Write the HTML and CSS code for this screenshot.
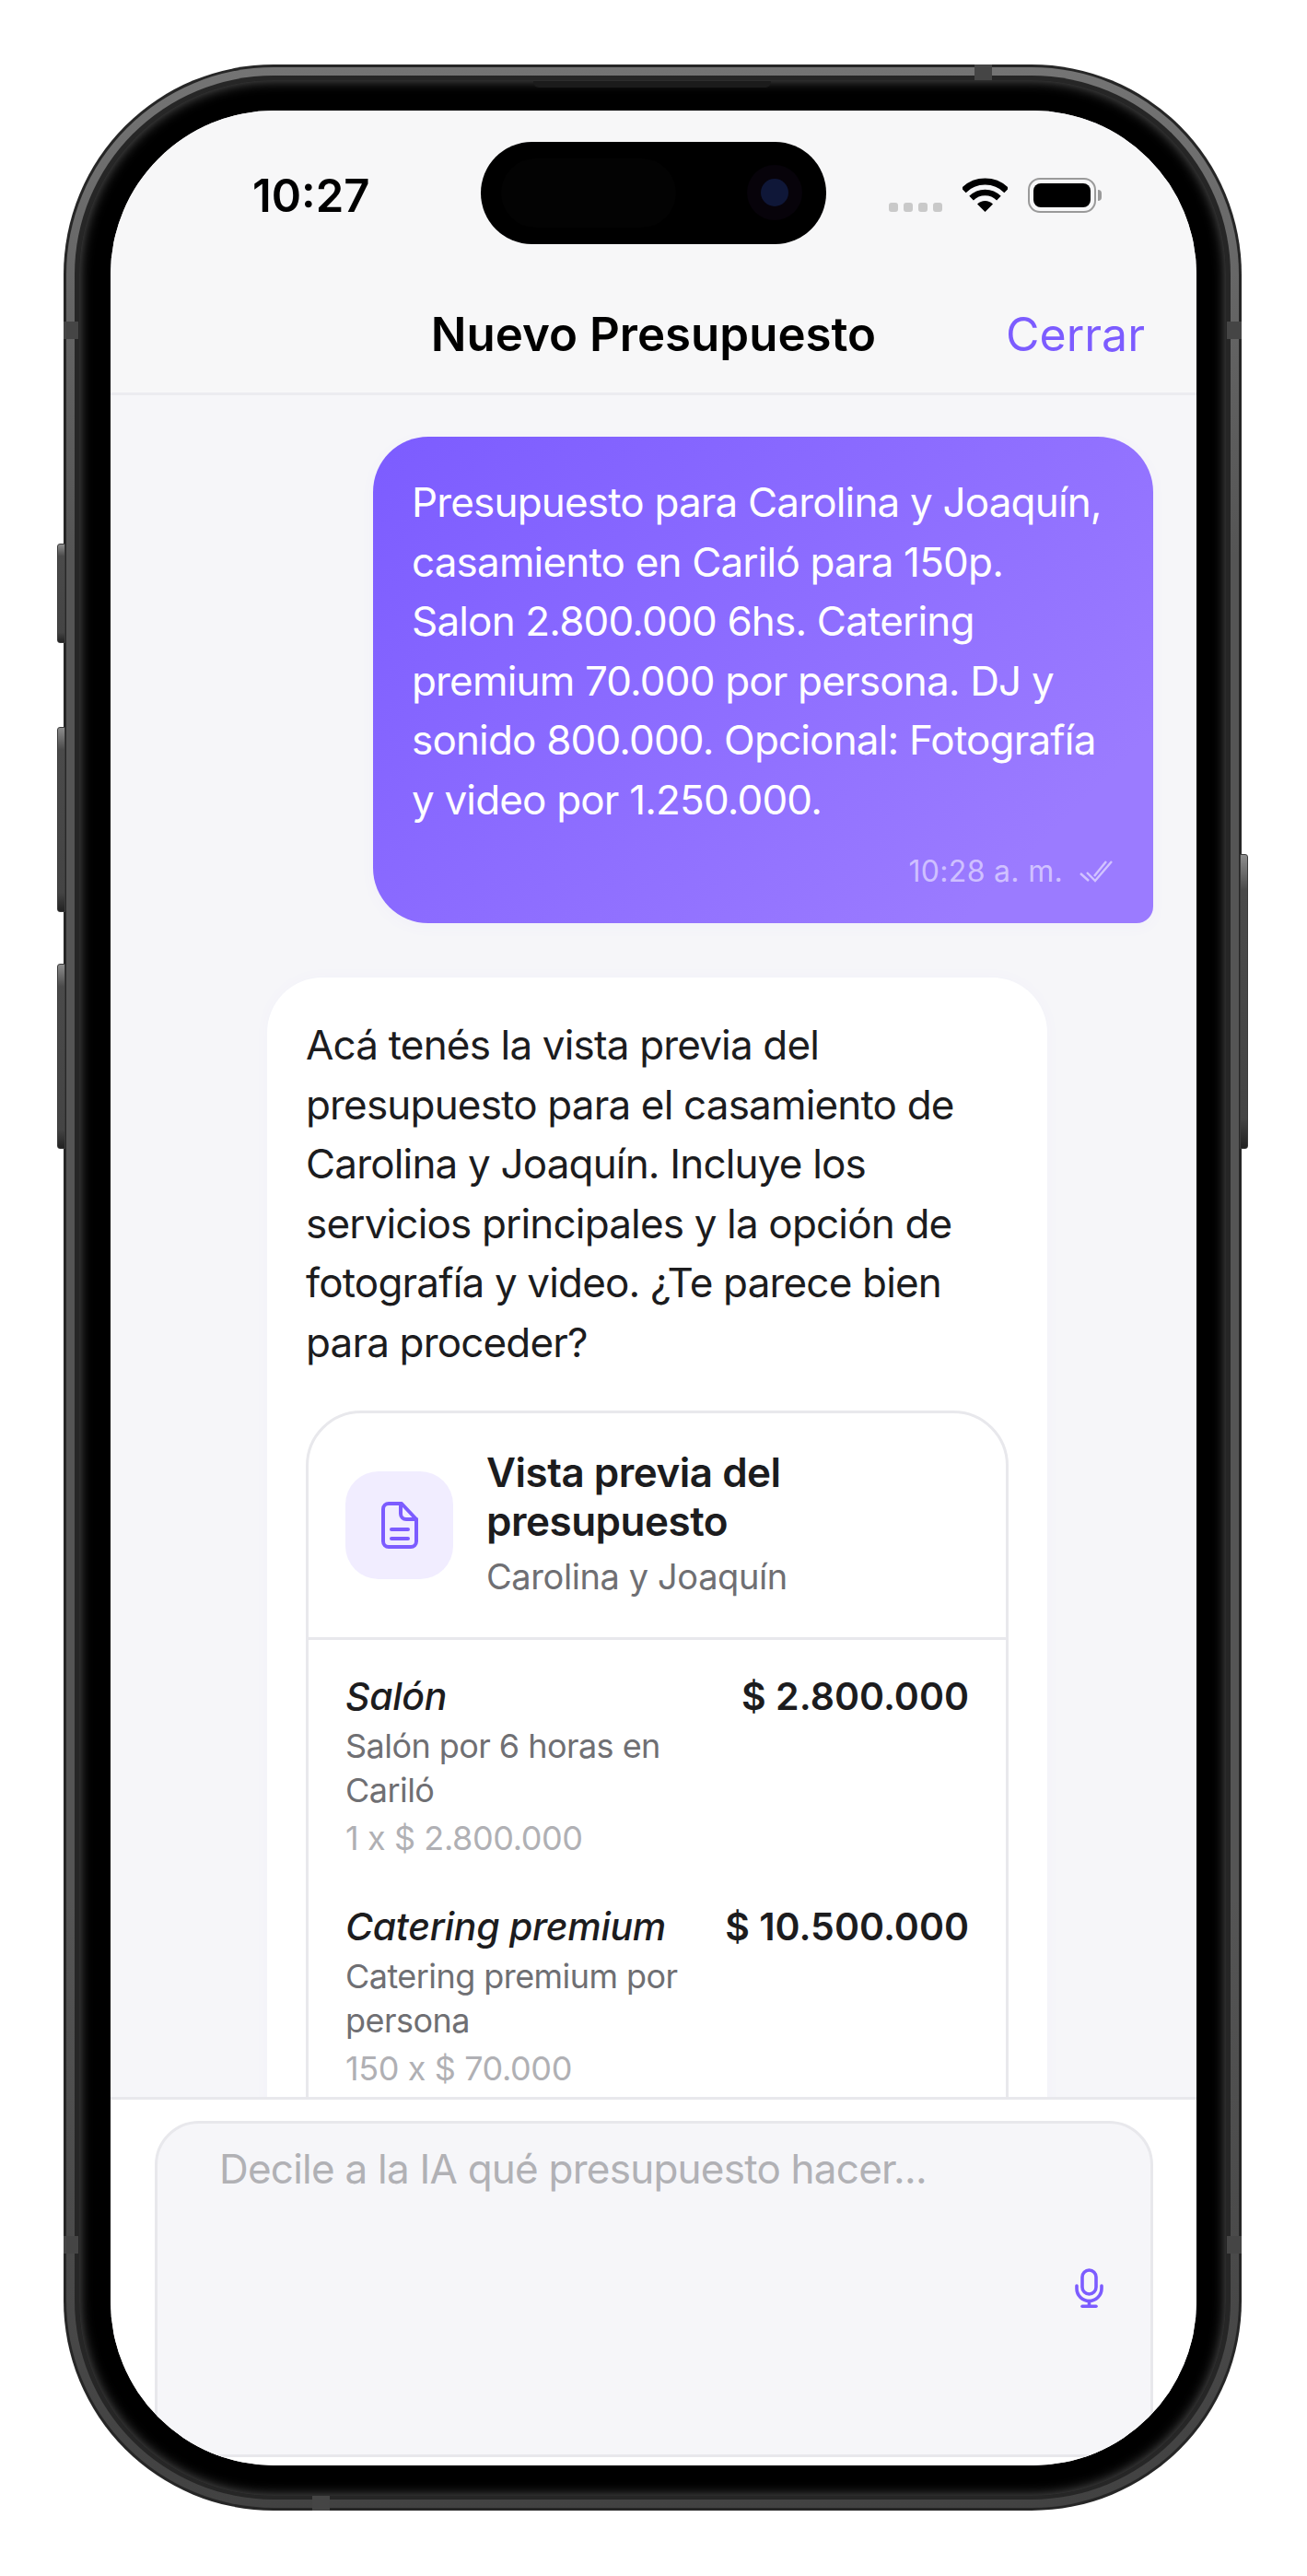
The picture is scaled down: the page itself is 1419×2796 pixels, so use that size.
FILE: index.html
```html
<!DOCTYPE html>
<html>
<head>
    <title>Nuevo Presupuesto</title>
    <link rel="stylesheet" href="styles.css">
</head>
<body>
    <div class="phone">
        <span class="side-btn btn-mute"></span>
        <span class="side-btn btn-up"></span>
        <span class="side-btn btn-down"></span>
        <span class="side-btn btn-power"></span>

        <span class="seam seam-top"></span>
        <span class="seam seam-left-a"></span>
        <span class="seam seam-left-b"></span>
        <span class="seam seam-right-a"></span>
        <span class="seam seam-right-b"></span>
        <span class="seam seam-bottom"></span>

        <div class="ring-metal">
            <div class="ring-dark">
                <div class="bezel">
                    <span class="speaker"></span>
                    <div class="screen">
                        <div class="island">
                            <span class="island-sensor"></span>
                            <span class="island-camera"><span class="island-lens"></span></span>
                        </div>

                        <div class="top-bar">
                            <div class="status-bar">
                                <span class="clock">10:27</span>
                                <div class="status-icons">
                                    <span class="signal-dots"><i></i><i></i><i></i><i></i></span>
                                    <svg class="wifi" viewBox="0 0 49 37">
                                        <path d="M1.2 13.7a33 33 0 0 1 46.6 0" fill="none" stroke="#000" stroke-width="7"/>
                                        <path d="M9.6 22.1a21 21 0 0 1 29.8 0" fill="none" stroke="#000" stroke-width="6.5"/>
                                        <path d="M24.5 37L16 28.5a12 12 0 0 1 17 0z" fill="#000"/>
                                    </svg>
                                    <span class="battery"><span class="battery-fill"></span></span>
                                    <span class="battery-nub"></span>
                                </div>
                            </div>
                            <div class="nav-bar">
                                <span></span>
                                <h1 class="nav-title">Nuevo Presupuesto</h1>
                                <a class="nav-close">Cerrar</a>
                            </div>
                        </div>

                        <div class="chat">
                            <div class="bubble bubble-user">
                                <p>Presupuesto para Carolina y Joaquín, casamiento en Cariló para 150p. Salon 2.800.000 6hs. Catering premium 70.000 por persona. DJ y sonido 800.000. Opcional: Fotografía y video por 1.250.000.</p>
                                <div class="bubble-meta">
                                    <span>10:28 a. m.</span>
                                    <svg class="ticks" viewBox="0 0 36 24" fill="none" stroke="currentColor" stroke-width="2.4">
                                        <path d="M1 14l9 8"/>
                                        <path d="M8 13l9 9L35 1"/>
                                        <path d="M16 17L29 1"/>
                                    </svg>
                                </div>
                            </div>

                            <div class="bubble bubble-bot">
                                <p>Acá tenés la vista previa del presupuesto para el casamiento de Carolina y Joaquín. Incluye los servicios principales y la opción de fotografía y video. ¿Te parece bien para proceder?</p>

                                <div class="quote-card">
                                    <div class="quote-head">
                                        <div class="quote-icon">
                                            <svg viewBox="0 0 40 51" fill="none" stroke="#7c5cff" stroke-width="4" stroke-linejoin="round" stroke-linecap="round">
                                                <path d="M8 2h14l16 17v24a6 6 0 0 1-6 6H8a6 6 0 0 1-6-6V8a6 6 0 0 1 6-6z"/>
                                                <path d="M21 2v11a6 6 0 0 0 6 6h11"/>
                                                <path d="M11 30h18"/>
                                                <path d="M11 40h18"/>
                                            </svg>
                                        </div>
                                        <div>
                                            <div class="quote-title">Vista previa del presupuesto</div>
                                            <div class="quote-client">Carolina y Joaquín</div>
                                        </div>
                                    </div>
                                    <div class="quote-items">
                                        <div class="item">
                                            <div class="item-info">
                                                <div class="item-name">Salón</div>
                                                <div class="item-desc">Salón por 6 horas en Cariló</div>
                                                <div class="item-qty">1 x $ 2.800.000</div>
                                            </div>
                                            <div class="item-price">$ 2.800.000</div>
                                        </div>
                                        <div class="item">
                                            <div class="item-info">
                                                <div class="item-name">Catering premium</div>
                                                <div class="item-desc">Catering premium por persona</div>
                                                <div class="item-qty">150 x $ 70.000</div>
                                            </div>
                                            <div class="item-price">$ 10.500.000</div>
                                        </div>
                                    </div>
                                </div>
                            </div>
                        </div>

                        <div class="composer">
                            <div class="composer-box">
                                <div class="placeholder">Decile a la IA qué presupuesto hacer...</div>
                                <svg class="mic" viewBox="0 0 31 43" fill="none" stroke="#7c5cff" stroke-width="3.6" stroke-linecap="round">
                                    <rect x="8" y="2" width="15" height="26" rx="7.5"/>
                                    <path d="M2 19v3a13.5 13.5 0 0 0 27 0v-3"/>
                                    <path d="M15.5 35.5v6"/>
                                    <path d="M8 41.2h15"/>
                                </svg>
                            </div>
                        </div>
                    </div>
                </div>
            </div>
        </div>
    </div>
</body>
</html>
```

FILE: styles.css
```css
* {
    box-sizing: border-box;
}
body {
    margin: 0;
    background-color: #ffffff;
    font-family: Inter, "Liberation Sans", sans-serif;
    color: #1c1c1e;
}
p {
    margin: 0;
}

/* phone frame */
.phone {
    position: relative;
    width: 1279px;
    height: 2655px;
    margin: 70px 0 0 69px;
    padding: 3px;
    background-color: #262626;
    border-radius: 228px;
}
.ring-metal {
    height: 100%;
    padding: 9px;
    background: linear-gradient(#747474, #555555 20%, #555555 75%, #424242);
    border-radius: 225px;
}
.ring-dark {
    height: 100%;
    padding: 5px 5px 4px;
    background-color: #262626;
    border-radius: 216px;
}
.bezel {
    position: relative;
    height: 100%;
    padding: 33px 32px 33px 34px;
    background-color: #000;
    border-radius: 211px;
    box-shadow: inset 0 0 14px rgba(120, 120, 120, 0.8);
}
.speaker {
    position: absolute;
    top: 1px;
    left: 493px;
    width: 258px;
    height: 7px;
    background-color: #1b1b1b;
    border-radius: 0 0 6px 6px;
}
.side-btn {
    position: absolute;
    width: 9px;
    background: linear-gradient(#8d8d8d, #4a4a4a 12%, #444 90%, #222);
    border: 1px solid #3a3a3a;
}
.btn-mute, .btn-up, .btn-down {
    left: -7px;
    border-radius: 3px 0 0 3px;
}
.btn-mute {
    top: 520px;
    height: 108px;
}
.btn-up {
    top: 719px;
    height: 201px;
}
.btn-down {
    top: 976px;
    height: 201px;
}
.btn-power {
    top: 857px;
    right: -7px;
    height: 320px;
    border-radius: 0 3px 3px 0;
}
.seam {
    position: absolute;
    background-color: #454545;
    z-index: 2;
}
.seam-top {
    top: 0;
    left: 989px;
    width: 19px;
    height: 17px;
}
.seam-left-a, .seam-left-b, .seam-right-a, .seam-right-b {
    width: 16px;
    height: 19px;
}
.seam-left-a {
    top: 279px;
    left: 0;
}
.seam-left-b {
    top: 2357px;
    left: 0;
}
.seam-right-a {
    top: 279px;
    right: 0;
}
.seam-right-b {
    top: 2357px;
    right: 0;
}
.seam-bottom {
    bottom: 0;
    left: 270px;
    width: 19px;
    height: 16px;
}

/* screen */
.screen {
    position: relative;
    display: flex;
    flex-direction: column;
    height: 100%;
    overflow: hidden;
    background-color: #f6f6f9;
    border-radius: 178px;
}
.island {
    position: absolute;
    top: 34px;
    left: 402px;
    width: 375px;
    height: 111px;
    background-color: #000;
    border-radius: 56px;
}
.island-sensor {
    position: absolute;
    top: 18px;
    left: 22px;
    width: 190px;
    height: 75px;
    background-color: #030303;
    border-radius: 38px;
}
.island-camera {
    position: absolute;
    top: 25px;
    right: 26px;
    width: 60px;
    height: 60px;
    background-color: #07030a;
    border-radius: 50%;
}
.island-lens {
    position: absolute;
    top: 15px;
    left: 15px;
    width: 30px;
    height: 30px;
    background-color: #0f1738;
    border-radius: 50%;
}

/* status + nav */
.top-bar {
    flex: none;
    height: 309px;
    background-color: #f7f7f8;
    border-bottom: 3px solid #ececf0;
}
.status-bar {
    display: flex;
    justify-content: space-between;
    align-items: flex-start;
    height: 208px;
    padding: 64px 103px 0 154px;
}
.clock {
    font-size: 49px;
    line-height: 58px;
    font-weight: 600;
    color: #000;
}
.status-icons {
    display: flex;
    align-items: flex-start;
    padding-top: 9px;
}
.signal-dots {
    display: flex;
    gap: 6px;
    margin-top: 27px;
    margin-right: 22px;
}
.signal-dots i {
    width: 10px;
    height: 10px;
    background-color: #c9c9c9;
    border-radius: 3px;
}
.wifi {
    width: 49px;
    height: 37px;
    margin-right: 22px;
}
.battery {
    width: 74px;
    height: 38px;
    padding: 4px;
    border: 2px solid #9a9a9a;
    border-radius: 13px;
}
.battery-fill {
    display: block;
    height: 100%;
    background-color: #000;
    border-radius: 8px;
}
.battery-nub {
    width: 4px;
    height: 12px;
    margin: 13px 0 0 2px;
    background-color: #9a9a9a;
    border-radius: 0 4px 4px 0;
}
.nav-bar {
    display: grid;
    grid-template-columns: 1fr auto 1fr;
    align-items: center;
    padding: 0 56px;
    height: 70px;
}
.nav-title {
    margin: 0;
    font-size: 51px;
    line-height: 70px;
    font-weight: 600;
    color: #000;
}
.nav-close {
    justify-self: end;
    font-size: 50px;
    line-height: 70px;
    color: #7c5cff;
}

/* chat */
.chat {
    flex: 1;
    min-height: 0;
    overflow: hidden;
    padding: 45px 47px 0 170px;
}
.bubble {
    width: 847px;
    font-size: 44px;
    line-height: 64.5px;
    letter-spacing: -0.83px;
}
.bubble-user {
    margin-left: auto;
    margin-bottom: 59px;
    padding: 39px 42px 34px;
    color: #fff;
    background: linear-gradient(135deg, #7c5cff, #9b7bff 85%);
    border-radius: 60px 60px 18px 60px;
    box-shadow: 0 4px 16px rgba(124, 92, 255, 0.04);
}
.bubble-meta {
    display: flex;
    justify-content: flex-end;
    align-items: center;
    gap: 18px;
    margin-top: 24px;
    padding-right: 2px;
    font-size: 32px;
    line-height: 44px;
    letter-spacing: 0.3px;
    color: rgba(255, 255, 255, 0.55);
}
.ticks {
    width: 36px;
    height: 24px;
}
.bubble-bot {
    margin-left: 0;
    padding: 41px 42px 0;
    background-color: #fff;
    border-radius: 60px 60px 0 0;
    box-shadow: 0 0 16px rgba(124, 92, 255, 0.03);
}
.quote-card {
    margin-top: 42px;
    background-color: #fff;
    border: 3px solid #e8e8ec;
    border-radius: 60px;
}
.quote-head {
    display: flex;
    align-items: center;
    gap: 36px;
    padding: 38px 40px 39px;
    border-bottom: 3px solid #e8e8ec;
}
.quote-icon {
    display: flex;
    flex: none;
    align-items: center;
    justify-content: center;
    width: 117px;
    height: 117px;
    background-color: #f1edff;
    border-radius: 36px;
}
.quote-icon svg {
    width: 40px;
    height: 51px;
}
.quote-title {
    font-size: 44px;
    line-height: 53px;
    font-weight: 600;
    letter-spacing: -0.5px;
}
.quote-client {
    margin-top: 9px;
    margin-bottom: 3px;
    font-size: 38px;
    line-height: 48px;
    letter-spacing: -0.4px;
    color: #6f6f73;
}
.quote-items {
    padding: 34px 40px 120px;
}
.item {
    display: flex;
    justify-content: space-between;
    align-items: flex-start;
    margin-bottom: 45px;
}
.item-info {
    width: 390px;
}
.item-name {
    font-size: 41px;
    line-height: 54px;
    font-style: italic;
    font-weight: 500;
    letter-spacing: -0.3px;
    white-space: nowrap;
}
.item-desc {
    margin-top: 3px;
    font-size: 36px;
    line-height: 48px;
    letter-spacing: -0.55px;
    color: #6f6f73;
}
.item-qty {
    margin-top: 4px;
    font-size: 36px;
    line-height: 48px;
    letter-spacing: -0.4px;
    color: #b0b0b4;
}
.item-price {
    font-size: 41px;
    line-height: 54px;
    font-weight: 600;
    letter-spacing: 0.01px;
}

/* composer */
.composer {
    flex: none;
    position: relative;
    height: 400px;
    padding: 23px 47px 0 48px;
    background-color: #fff;
    border-top: 3px solid #e8e8ec;
}
.composer-box {
    position: relative;
    height: 365px;
    padding: 17px 67px;
    background-color: #f6f6f9;
    border: 3px solid #e8e8ec;
    border-radius: 48px;
}
.placeholder {
    font-size: 44px;
    line-height: 64px;
    letter-spacing: -0.77px;
    color: #b1b1b5;
}
.mic {
    position: absolute;
    top: 157px;
    right: 51px;
    width: 31px;
    height: 43px;
}
```
